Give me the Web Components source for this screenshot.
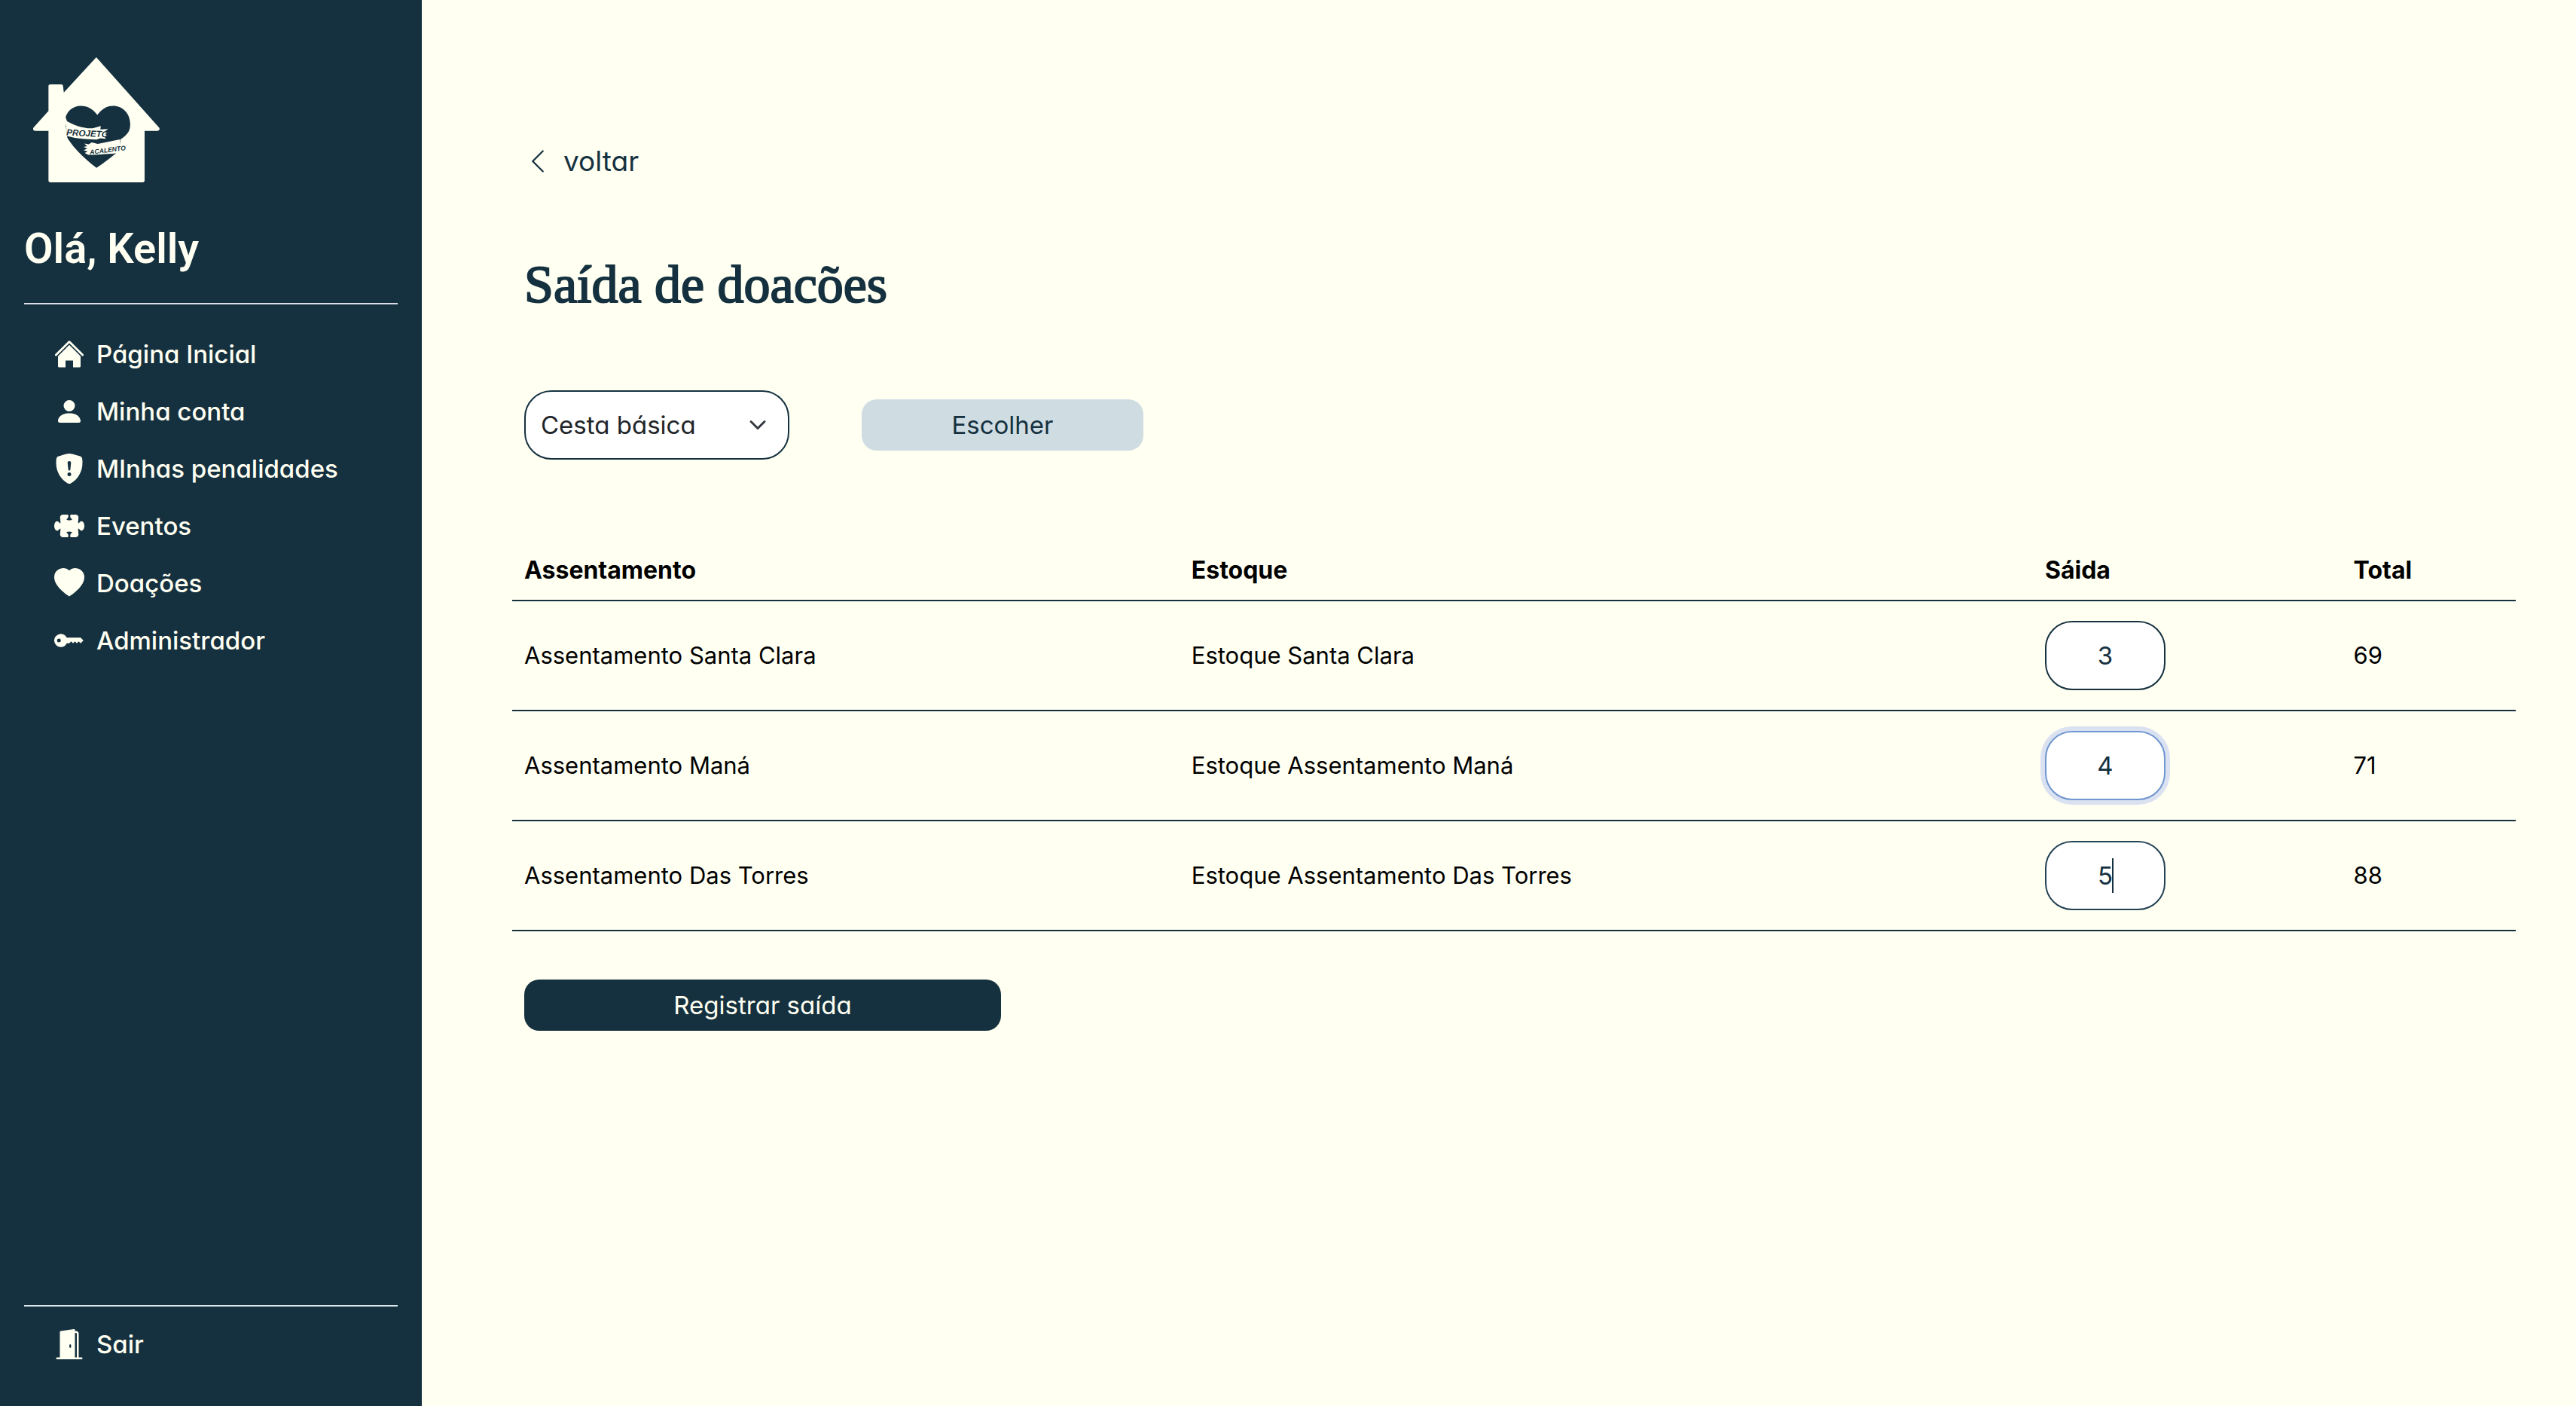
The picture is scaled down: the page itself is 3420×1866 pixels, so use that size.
<!DOCTYPE html>
<html lang="pt-BR">
<head>
<meta charset="utf-8">
<meta name="viewport" content="width=device-width, initial-scale=1">
<title>Saída de doações</title>
<style>
  :root {
    --navy: #15313f;
    --cream: #fffff2;
    --mist: #cfdde3;
    --ui: Inter, "Liberation Sans", sans-serif;
    --greeting: Roboto, "Liberation Sans", sans-serif;
    --serif: "Liberation Serif", serif;
  }
  html, body { margin: 0; }
  body {
    font: 400 33px/48px var(--ui);
    color: #000;
    background: var(--cream);
  }
</style>
</head>
<body>
<app-shell>
  <side-bar slot="side" user="Kelly">
    <nav-item icon="house">Página Inicial</nav-item>
    <nav-item icon="person">Minha conta</nav-item>
    <nav-item icon="shield">MInhas penalidades</nav-item>
    <nav-item icon="puzzle">Eventos</nav-item>
    <nav-item icon="heart">Doações</nav-item>
    <nav-item icon="key">Administrador</nav-item>
    <nav-item slot="exit" icon="door">Sair</nav-item>
  </side-bar>
  <back-link>voltar</back-link>
  <page-title>Saída de doacões</page-title>
  <item-picker></item-picker>
  <stock-table></stock-table>
  <app-button variant="primary">Registrar saída</app-button>
</app-shell>

<script>
const ICONS = {
  house: '<path d="M8 3.1l6 6V14.4a.6.6 0 0 1-.6.6H10V11.4H6V15H2.6a.6.6 0 0 1-.6-.6V9.1z"/><path d="M7.293 1.3a1 1 0 0 1 1.414 0l6.747 6.746a.5.5 0 0 1-.708.808L8 2.207 1.254 8.854a.5.5 0 1 1-.708-.808z"/>',
  person: '<path d="M3 14s-1 0-1-1 1-4 6-4 6 3 6 4-1 1-1 1H3zm5-6a3 3 0 1 0 0-6 3 3 0 0 0 0 6z"/>',
  shield: '<path fill-rule="evenodd" d="M8 0c-.69 0-1.843.265-2.928.56-1.11.3-2.229.655-2.887.87a1.54 1.54 0 0 0-1.044 1.262c-.596 4.477.787 7.795 2.465 9.99a11.777 11.777 0 0 0 2.517 2.453c.386.273.744.482 1.048.625.28.132.581.24.829.24s.548-.108.829-.24a7.159 7.159 0 0 0 1.048-.625 11.775 11.775 0 0 0 2.517-2.453c1.678-2.195 3.061-5.513 2.465-9.99a1.541 1.541 0 0 0-1.044-1.263 62.467 62.467 0 0 0-2.887-.87C9.843.266 8.69 0 8 0zm-.55 8.502L7.1 4.995a.905.905 0 1 1 1.8 0l-.35 3.507a.552.552 0 0 1-1.1 0zM8.002 12a1 1 0 1 1 0-2 1 1 0 0 1 0 2z"/>',
  puzzle: '<path d="M3.112 3.645A1.5 1.5 0 0 1 4.605 2H7a.5.5 0 0 1 .5.5v.382c0 .696-.497 1.182-.872 1.469a.459.459 0 0 0-.115.118.113.113 0 0 0-.012.025L6.5 4.5v.003l.003.01c.004.01.014.028.036.053a.86.86 0 0 0 .27.194C7.09 4.9 7.51 5 8 5c.492 0 .912-.1 1.19-.24a.86.86 0 0 0 .271-.194.213.213 0 0 0 .036-.054l.003-.01v-.008a.112.112 0 0 0-.012-.025.459.459 0 0 0-.115-.118c-.375-.287-.872-.773-.872-1.469V2.5A.5.5 0 0 1 9 2h2.395a1.5 1.5 0 0 1 1.493 1.645L12.645 6.5h.237c.195 0 .42-.147.675-.48.21-.274.528-.52.943-.52.568 0 .947.447 1.154.862C15.877 6.807 16 7.387 16 8s-.123 1.193-.346 1.638c-.207.415-.586.862-1.154.862-.415 0-.733-.246-.943-.52-.255-.333-.48-.48-.675-.48h-.237l.243 2.855A1.5 1.5 0 0 1 11.395 14H9a.5.5 0 0 1-.5-.5v-.382c0-.696.497-1.182.872-1.469a.459.459 0 0 0 .115-.118.113.113 0 0 0 .012-.025L9.5 11.5v-.003l-.003-.01a.214.214 0 0 0-.036-.053.859.859 0 0 0-.27-.194C8.91 11.1 8.49 11 8 11c-.491 0-.912.1-1.19.24a.859.859 0 0 0-.271.194.214.214 0 0 0-.036.054l-.003.01v.002l.001.006a.113.113 0 0 0 .012.025c.016.027.05.068.115.118.375.287.872.773.872 1.469v.382a.5.5 0 0 1-.5.5H4.605a1.5 1.5 0 0 1-1.493-1.645L3.356 9.5h-.238c-.195 0-.42.147-.675.48-.21.274-.528.52-.943.52-.568 0-.947-.447-1.154-.862C.123 9.193 0 8.613 0 8s.123-1.193.346-1.638C.553 5.947.932 5.5 1.5 5.5c.415 0 .733.246.943.52.255.333.48.48.675.48h.238l-.244-2.855z"/>',
  heart: '<path d="M8 1.314C12.438-3.248 23.534 4.735 8 15-7.534 4.736 3.562-3.248 8 1.314z"/>',
  key: '<path fill-rule="evenodd" d="M3.5 11.5a3.5 3.5 0 1 1 3.163-5H14L15.5 8 14 9.5l-1-1-1 1-1-1-1 1-1-1-1 1H6.663a3.5 3.5 0 0 1-3.163 2zM2.5 9a1 1 0 1 0 0-2 1 1 0 0 0 0 2z"/>',
  door: '<path fill-rule="evenodd" d="M1.5 15a.5.5 0 0 0 0 1h13a.5.5 0 0 0 0-1H13V2.5A1.5 1.5 0 0 0 11.5 1H11V.5a.5.5 0 0 0-.57-.495l-7 1A.5.5 0 0 0 3 1.5V15H1.5zM11 2h.5a.5.5 0 0 1 .5.5V15h-1V2zm-2.5 8c-.276 0-.5-.448-.5-1s.224-1 .5-1 .5.448.5 1-.224 1-.5 1z"/>'
};

class Base extends HTMLElement {
  connectedCallback() {
    if (this.shadowRoot) return;
    this.attachShadow({ mode: 'open' }).innerHTML =
      '<style>:host,*,*::before,*::after{box-sizing:border-box}' + this.css() + '</style>' + this.html();
  }
}

customElements.define('app-shell', class extends Base {
  css() { return `
    :host { display: flex; min-height: 100vh; }
    aside { flex: none; display: flex; }
    main { flex: 1; min-width: 0; padding: 184px 80px 64px 120px;
           display: flex; flex-direction: column; align-items: stretch; }
    ::slotted(app-button) { align-self: flex-start; margin: 64px 16px 0; width: 633px; }
  `; }
  html() { return '<aside><slot name="side"></slot></aside><main><slot></slot></main>'; }
});

customElements.define('house-logo', class extends Base {
  css() { return ':host{display:block} svg{display:block;width:168px;height:166px}'; }
  html() { return `
    <svg viewBox="73 48 503 497" role="img" aria-label="Projeto Acalento">
      <path fill="#fffff2" d="M324 48 574 328q5 9-6 13H516V537q0 8-8 8H142q-8 0-8-8V341H82q-13-3-8-13L134 261V163q0-7 8-7H184q8 0 8 8L195 188Z"/>
      <path fill="#15313f" d="M328 277C345 255 365 241 390 241 430 241 459 272 459 315 459 345 442 360 420 374L414 420C390 440 350 472 325 487 290 462 235 412 209 368L203 322 207 300 202 287C208 262 232 241 262 241 290 241 312 255 328 277Z"/>
      <path fill="#fffff2" d="M204 300C235 318 275 332 310 330L342 321 340 335 371 333 357 344 372 348 358 353 370 361 356 362 362 372 340 370 325 375C285 373 245 372 206 360Z"/>
      <path fill="#fffff2" d="M306 386 330 392 418 374 416 428C380 432 335 434 292 436L278 428 290 422 274 418 288 410 273 404 288 401 276 391 294 394Z"/>
      <text x="205" y="358" transform="rotate(3 205 358)" font-family="Liberation Sans, sans-serif" font-weight="700" font-style="italic" font-size="35" fill="#15313f">PROJETO</text>
      <text x="299" y="434" transform="rotate(-7 299 434)" font-family="Liberation Sans, sans-serif" font-weight="700" font-style="italic" font-size="26" fill="#15313f">ACALENTO</text>
    </svg>`; }
});

customElements.define('side-bar', class extends Base {
  css() { return `
    :host { display: flex; flex-direction: column; width: 560px; padding: 76px 32px 44px;
            background: var(--navy); color: var(--cream); }
    house-logo { margin-left: 12px; }
    h2 { margin: 52px 0 0; padding-bottom: 36px; border-bottom: 2px solid #dcdfe8;
         font: 600 56px/72px var(--greeting); }
    nav { flex: 1; display: flex; flex-direction: column; margin-top: 28px; }
    .exit { border-top: 2px solid #dce6ea; padding-top: 12px; }
  `; }
  html() { return `
    <house-logo></house-logo>
    <h2>Olá, ${this.getAttribute('user')}</h2>
    <nav><slot></slot></nav>
    <div class="exit"><slot name="exit"></slot></div>`; }
});

customElements.define('nav-item', class extends Base {
  css() { return `
    :host { display: block; }
    a { display: flex; align-items: center; gap: 16px; height: 76px; padding-left: 40px;
        color: inherit; text-decoration: none; font-weight: 500; font-feature-settings: "cv11"; }
    svg { width: 40px; height: 40px; fill: currentColor; }
  `; }
  html() { return `<a href="#"><svg viewBox="0 0 16 16" aria-hidden="true">${ICONS[this.getAttribute('icon')]}</svg><span><slot></slot></span></a>`; }
});

customElements.define('back-link', class extends Base {
  css() { return `
    :host { display: flex; margin-left: 16px; }
    a { display: flex; align-items: center; gap: 16px; color: var(--navy); text-decoration: none;
        font-size: 37px; line-height: 60px; font-feature-settings: "cv11"; }
    svg { width: 36px; height: 36px; fill: currentColor; }
  `; }
  html() { return `<a href="#"><svg viewBox="0 0 16 16" aria-hidden="true"><path d="M11.354 1.646a.5.5 0 0 1 0 .708L5.707 8l5.647 5.646a.5.5 0 0 1-.708.708l-6-6a.5.5 0 0 1 0-.708l6-6a.5.5 0 0 1 .708 0z"/></svg><span><slot></slot></span></a>`; }
});

customElements.define('page-title', class extends Base {
  css() { return `
    :host { display: block; margin: 90px 16px 0; }
    h1 { margin: 0; font: 400 70px/88px var(--serif); color: var(--navy); -webkit-text-stroke: 2px var(--navy); }
  `; }
  html() { return '<h1><slot></slot></h1>'; }
});

customElements.define('app-button', class extends Base {
  css() { return `
    :host { display: block; }
    button { display: block; width: 100%; height: 68px; padding: 0 24px; border: 0; border-radius: 20px;
             background: var(--mist); color: var(--navy); font: 400 33px/48px var(--ui);
             font-feature-settings: "cv11"; cursor: pointer; }
    :host([variant="primary"]) button { background: var(--navy); color: var(--cream); }
  `; }
  html() { return '<button type="button"><slot></slot></button>'; }
});

customElements.define('item-picker', class extends Base {
  css() { return `
    :host { display: flex; align-items: center; gap: 96px; margin: 96px 16px 0; }
    .pick { display: grid; align-items: center; width: 352px; }
    .pick > * { grid-area: 1 / 1; }
    select { appearance: none; width: 100%; height: 92px; margin: 0; padding: 0 72px 0 20px;
             border: 2px solid var(--navy); border-radius: 36px; background: #fff; color: #212529;
             font: 400 33px/48px var(--ui); font-feature-settings: "cv11"; }
    svg { justify-self: end; width: 24px; height: 24px; margin-right: 30px; pointer-events: none; }
    app-button { width: 374px; }
  `; }
  html() { return `
    <div class="pick">
      <select aria-label="Item"><option>Cesta básica</option></select>
      <svg viewBox="0 0 16 16" fill="none" stroke="#343a40" stroke-width="2" stroke-linecap="round" stroke-linejoin="round" aria-hidden="true"><path d="m2 5 6 6 6-6"/></svg>
    </div>
    <app-button>Escolher</app-button>`; }
});

customElements.define('amount-field', class extends Base {
  css() { return `
    :host { display: grid; place-items: center; width: 160px; }
    input, .caret { grid-area: 1 / 1; }
    input { width: 100%; height: 92px; margin: 0; padding: 0; border: 2px solid var(--navy);
            border-radius: 36px; background: #fff; color: var(--navy); text-align: center;
            font: 400 33px/48px var(--ui); outline: none; }
    :host([state="ring"]) input { border-color: #6f96cf; box-shadow: 0 0 0 6px #dae1f1; }
    .caret { display: none; width: 2px; height: 46px; background: var(--navy); margin-left: 20px; }
    :host([state="typing"]) input { border-color: #234256; }
    :host([state="typing"]) .caret { display: block; }
  `; }
  html() { return `<input type="text" inputmode="numeric" aria-label="${this.getAttribute('label')}" value="${this.getAttribute('value')}"><span class="caret"></span>`; }
});

customElements.define('stock-table', class extends Base {
  css() { return `
    :host { display: block; margin-top: 106px; }
    table { width: 100%; border-collapse: separate; border-spacing: 0; table-layout: fixed; font-size: 31px; }
    col:nth-child(1) { width: 33.3%; } col:nth-child(2) { width: 42.6%; }
    col:nth-child(3) { width: 15.4%; } col:nth-child(4) { width: 8.7%; }
    th, td { text-align: left; vertical-align: middle; border-bottom: 2px solid var(--navy); }
    th { padding: 17px 16px 15px; font-size: 32px; font-weight: 700; }
    td { padding: 26px 16px; }
  `; }
  html() {
    const rows = [
      ['Assentamento Santa Clara', 'Estoque Santa Clara', 3, 69, ''],
      ['Assentamento Maná', 'Estoque Assentamento Maná', 4, 71, 'ring'],
      ['Assentamento Das Torres', 'Estoque Assentamento Das Torres', 5, 88, 'typing']
    ];
    return `<table><colgroup><col><col><col><col></colgroup>
      <thead><tr><th>Assentamento</th><th>Estoque</th><th>Sáida</th><th>Total</th></tr></thead>
      <tbody>${rows.map(r => `<tr><td>${r[0]}</td><td>${r[1]}</td><td><amount-field label="Saída de ${r[0]}" value="${r[2]}" state="${r[4]}"></amount-field></td><td>${r[3]}</td></tr>`).join('')}</tbody></table>`;
  }
});
</script>
</body>
</html>
